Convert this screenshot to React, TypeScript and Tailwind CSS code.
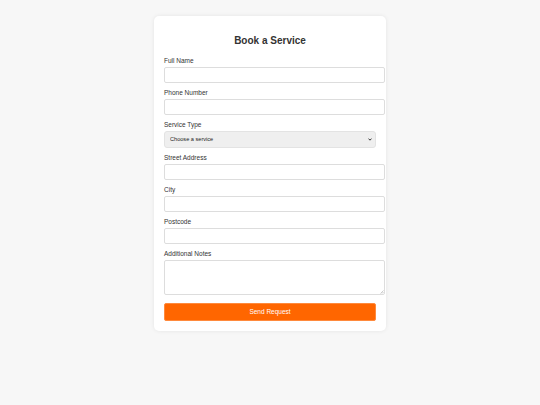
const fields = [
  { label: "Full Name", type: "text" },
  { label: "Phone Number", type: "tel" },
];

const fields2 = [
  { label: "Street Address", type: "text" },
  { label: "City", type: "text" },
  { label: "Postcode", type: "text" },
];

function Label({ children }: { children: React.ReactNode }) {
  return <label className="block text-[6.5px] leading-[8px] text-[#333] mb-[2px]">{children}</label>;
}

function Field({ label, type }: { label: string; type: string }) {
  return (
    <div className="mb-[6px]">
      <Label>{label}</Label>
      <input
        type={type}
        className="block w-[221px] h-[16px] bg-white border border-[#dddddd] rounded-[2px] px-1 text-[6.5px] outline-none"
      />
    </div>
  );
}

export default function App() {
  return (
    <div className="h-[405px] w-full bg-[#f7f7f7] pt-[16px]" style={{ fontFamily: '"Liberation Sans", Arial, sans-serif' }}>
      <div className="mx-auto w-[232px] bg-white rounded-[5px] shadow-[0_0_4px_rgba(0,0,0,0.08)] px-[10px] pt-[19px] pb-[10px]">
        <h1 className="text-center text-[10px] leading-[12px] font-bold text-[#333] mb-[10px]">Book a Service</h1>
        {fields.map((f) => (
          <Field key={f.label} {...f} />
        ))}
        <div className="mb-[6px]">
          <Label>Service Type</Label>
          <div className="relative">
            <select className="block w-full h-[16.5px] appearance-none bg-[#efefef] border border-[#e3e3e3] rounded-[3px] pl-[5px] text-[5.6px] text-[#222]">
              <option>Choose a service</option>
            </select>
            <svg className="absolute right-[4px] top-[7px] w-[4px] h-[3px] pointer-events-none" viewBox="0 0 8 6">
              <path d="M1 1.2 L4 4.4 L7 1.2" fill="none" stroke="#222" strokeWidth="1.8" />
            </svg>
          </div>
        </div>
        {fields2.map((f) => (
          <Field key={f.label} {...f} />
        ))}
        <div className="mb-[8px] relative">
          <Label>Additional Notes</Label>
          <textarea className="block w-[221px] h-[35px] bg-white border border-[#dddddd] rounded-[2px] px-1 text-[6.5px] outline-none resize-none" />
          <svg className="absolute left-[216px] bottom-[1px] w-[4px] h-[4px] pointer-events-none" viewBox="0 0 4 4">
            <path d="M0.5 3.5 L3.5 0.5 M2 3.5 L3.5 2" stroke="#aaa" strokeWidth="0.6" />
          </svg>
        </div>
        <button className="block w-full h-[18px] bg-[#ff6600] border border-[#ff8a3d] rounded-[2px] text-white text-[6.5px]">
          Send Request
        </button>
      </div>
    </div>
  );
}
